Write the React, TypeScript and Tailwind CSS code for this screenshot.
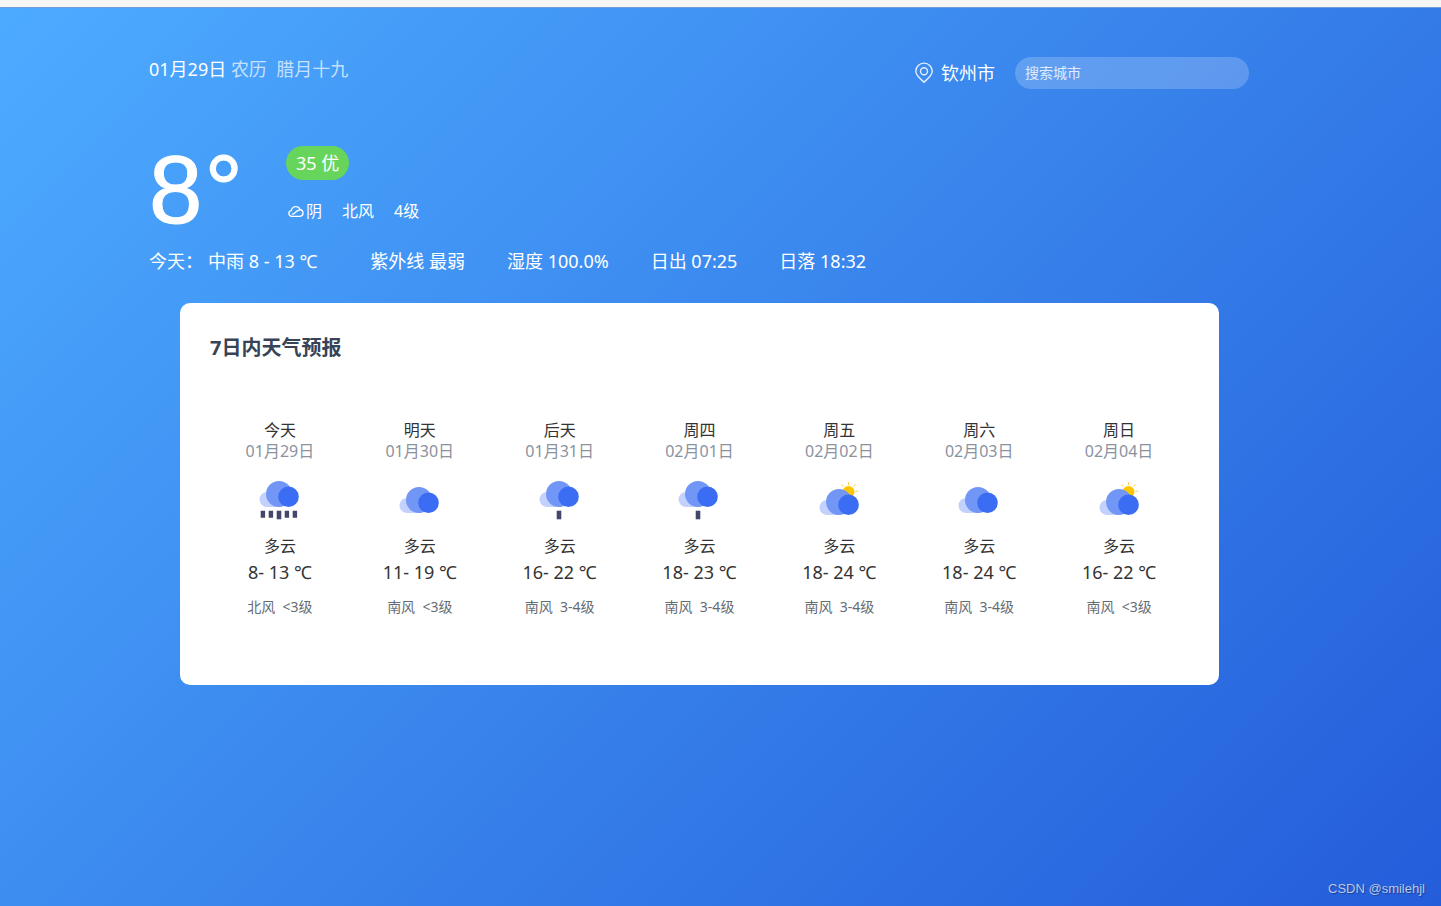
import React from "react";

type Sky = "cloudy" | "light-rain" | "heavy-rain" | "partly-sunny";

interface Forecast {
  day: string;
  date: string;
  sky: Sky;
  label: string;
  range: string;
  wind: string;
}

const forecasts: Forecast[] = [
  { day: "今天", date: "01月29日", sky: "heavy-rain", label: "多云", range: "8- 13 ℃", wind: "北风  <3级" },
  { day: "明天", date: "01月30日", sky: "cloudy", label: "多云", range: "11- 19 ℃", wind: "南风  <3级" },
  { day: "后天", date: "01月31日", sky: "light-rain", label: "多云", range: "16- 22 ℃", wind: "南风  3-4级" },
  { day: "周四", date: "02月01日", sky: "light-rain", label: "多云", range: "18- 23 ℃", wind: "南风  3-4级" },
  { day: "周五", date: "02月02日", sky: "partly-sunny", label: "多云", range: "18- 24 ℃", wind: "南风  3-4级" },
  { day: "周六", date: "02月03日", sky: "cloudy", label: "多云", range: "18- 24 ℃", wind: "南风  3-4级" },
  { day: "周日", date: "02月04日", sky: "partly-sunny", label: "多云", range: "16- 22 ℃", wind: "南风  <3级" },
];

function Cloud() {
  return (
    <g>
      <path d="M7.5 15A7.5 7.5 0 0 0 7.5 30H22V15Z" fill="#c3d2fd" />
      <circle cx="19.5" cy="17" r="13" fill="#7296f5" />
      <circle cx="29" cy="19.7" r="10.3" fill="#3a6df4" />
    </g>
  );
}

function SkyIcon({ sky }: { sky: Sky }) {
  const rain = sky === "heavy-rain" || sky === "light-rain";
  const shift = rain ? "translate(-0.5 -3)" : sky === "cloudy" ? "translate(-0.5 3)" : "translate(0.5 5)";
  return (
    <svg viewBox="0 0 40 40" className="size-10 overflow-visible" aria-hidden="true">
      {sky === "partly-sunny" && (
        <g>
          <circle cx="29.5" cy="12" r="6" fill="#fdc500" />
          <path
            d="M29.500 4.800V2.600M24.200 6.300l-1.300-1.600M34.800 6.300l1.300-1.600M36.700 11.200h2M35.500 17l1.600 1.200"
            stroke="#fdd14d"
            strokeWidth="1"
            strokeLinecap="round"
          />
        </g>
      )}
      <g transform={shift}>
        <Cloud />
      </g>
      {sky === "heavy-rain" && (
        <path d="M.7 30.700h4.400v7H.7zM8.700 30.700h4.400v7H8.700zM24.700 30.700h4.400v7H24.700zM32.700 30.700h4.400v7H32.700z" fill="#44466b" />
      )}
      {rain && <path d="M16.700 30.700h4.600v8.600H16.700z" fill="#44466b" />}
    </svg>
  );
}

export default function App() {
  return (
    <div className="flex min-h-screen flex-col font-['Noto_Sans','Noto_Sans_CJK_SC',sans-serif] text-white">
      <div className="h-2 border-b border-[#6f9fd8] bg-[#f6f6f6]" />
      <div className="flex grow flex-col bg-[linear-gradient(135deg,#4dabff,#245dda)] pr-[43px]">
        <main className="mx-auto w-full max-w-[1100px] grow pt-[49px]">
          <header className="flex items-start justify-between">
            <p className="text-lg leading-6">
              01月29日 <span className="whitespace-pre text-white/70">农历  腊月十九</span>
            </p>
            <div className="flex items-center">
              <svg viewBox="0 0 20 22" className="mr-[7px] h-[22px] w-5" fill="none" stroke="#e3eefe" strokeWidth="1.4" aria-hidden="true">
                <path d="M10 20.2C7.6 17.6 1.8 14 1.8 9.300a8.200 8.200 0 0 1 16.400 0C18.200 14 12.400 17.600 10 20.200Z" strokeLinejoin="round" />
                <circle cx="10" cy="9.300" r="3.500" />
              </svg>
              <span className="text-lg leading-8">钦州市</span>
              <input
                type="text"
                aria-label="搜索城市"
                placeholder="搜索城市"
                className="ml-5 h-8 w-[234px] rounded-full bg-white/20 px-2.5 pb-0.5 text-sm outline-none placeholder:text-white/80"
              />
            </div>
          </header>

          <section className="mt-[57px] flex items-start">
            <div className="flex w-[137px] gap-0.5 font-['Liberation_Sans',sans-serif] text-[96px] leading-[88px] [-webkit-text-stroke:1px_white]">
              <span>8</span>
              <span>°</span>
            </div>
            <div>
              <span className="inline-block rounded-full bg-[#67d55c] px-2.5 text-lg leading-[34px]">35 优</span>
              <div className="mt-[19px] flex items-center gap-5 text-base leading-6">
                <span className="flex items-center">
                  <svg viewBox="0 0 20 20" className="size-5" fill="none" stroke="white" strokeWidth="1.3" aria-hidden="true">
                    <path d="M5.500 15.300C2.200 14.600 1.900 10.600 5.200 9.700C6.200 4.900 12.200 4.200 14 8.500C17.800 9.300 18.200 14.200 14.500 15.300Z" strokeLinejoin="round" />
                    <path d="M6.300 13.200C8.300 12.900 8.500 12.400 9.500 11.300S11.300 9.500 13.300 9" strokeLinecap="round" />
                  </svg>
                  阴
                </span>
                <span>北风</span>
                <span>4级</span>
              </div>
            </div>
          </section>

          <section className="mt-[15px] flex text-lg leading-6">
            <span className="mr-[5px]">今天：</span>
            <span className="mr-[53px]">中雨 8 - 13 ℃</span>
            <span className="mr-[42px]">紫外线 最弱</span>
            <span className="mr-[42px]">湿度 100.0%</span>
            <span className="mr-[42px]">日出 07:25</span>
            <span>日落 18:32</span>
          </section>

          <section className="mt-[30px] mr-[30px] ml-[31px] rounded-[10px] bg-white px-[30px] pt-[31px] pb-[66px] text-[#333]">
            <h2 className="text-xl leading-7 font-bold text-[#374357]">7日内天气预报</h2>
            <ul className="mt-[58px] grid grid-cols-7 text-center">
              {forecasts.map((f) => (
                <li key={f.date} className="flex flex-col items-center">
                  <span className="text-base leading-[21px]">{f.day}</span>
                  <span className="text-base leading-[21px] text-[#8a929f]">{f.date}</span>
                  <span className="mt-[18px] mb-[14px]">
                    <SkyIcon sky={f.sky} />
                  </span>
                  <span className="text-base leading-6">{f.label}</span>
                  <span className="text-lg leading-7">{f.range}</span>
                  <span className="mt-[9px] text-sm leading-6 whitespace-pre text-[#666c74]">{f.wind}</span>
                </li>
              ))}
            </ul>
          </section>
        </main>
        <footer className="-mr-[43px] px-4 pb-[7px] text-right font-['Liberation_Sans',sans-serif] text-[13px] leading-5 text-[#b9c9e8] [text-shadow:1px_1px_1px_#1b3f94]">
          CSDN @smilehjl
        </footer>
      </div>
    </div>
  );
}
